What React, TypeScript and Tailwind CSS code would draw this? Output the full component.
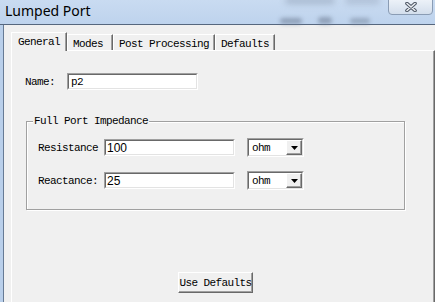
const mono = "font-['Liberation_Mono',monospace] text-[11px] tracking-[-0.6px] text-black leading-[12px]";

function Sunken({ className, children }: { className: string; children?: React.ReactNode }) {
  return (
    <div className={`border border-t-[#a0a0a0] border-l-[#a0a0a0] border-b-white border-r-white ${className}`}>
      <div className="h-full border border-t-[#696969] border-l-[#696969] border-b-[#e3e3e3] border-r-[#e3e3e3] bg-white flex items-center pl-[1px]">
        {children}
      </div>
    </div>
  );
}

function Combo() {
  return (
    <Sunken className="w-[57px] h-[19px]">
      <span className={`${mono} flex-1 pl-[2px]`}>ohm</span>
      <div className="w-[16px] h-[15px] border border-t-white border-l-white border-b-[#696969] border-r-[#696969] bg-[#f0f0f0] shadow-[inset_-1px_-1px_0_#a0a0a0] flex items-center justify-center">
        <svg width="7" height="4" viewBox="0 0 7 4">
          <path d="M0 0h7L3.5 4z" fill="#000" />
        </svg>
      </div>
    </Sunken>
  );
}

function Tab({ label, active, w }: { label: string; active?: boolean; w: string }) {
  return active ? (
    <div className={`${w} h-[19px] -mb-px relative z-10 bg-[#f0f0f0] border-t border-l border-t-white border-l-white border-r border-r-[#696969] shadow-[inset_-1px_0_0_#a0a0a0] pl-[6px] pt-[3px] flex items-start`}>
      <span className={mono}>{label}</span>
    </div>
  ) : (
    <div className={`${w} h-[16px] border-t border-l border-t-white border-l-white border-r border-r-[#696969] shadow-[inset_-1px_0_0_#a0a0a0] pl-[5px] pt-[3px] flex items-start`}>
      <span className={mono}>{label}</span>
    </div>
  );
}

export default function App() {
  return (
    <div className="w-[435px] h-[302px] overflow-hidden bg-[#c3d6ee] flex flex-col">
      <div className="h-[24px] relative shrink-0 bg-gradient-to-b from-[#c9dbf1] to-[#bed3ed]">
        <span className="absolute left-[5px] top-[2px] font-['Noto_Sans',sans-serif] text-[14px] text-black leading-[18px]">
          Lumped Port
        </span>
        <div className="absolute left-[285px] top-[-3px] w-[50px] h-[7px] rounded-full bg-[#8797ad]/50 blur-[3px]" />
        <div className="absolute left-[345px] top-[-3px] w-[35px] h-[7px] rounded-full bg-[#8797ad]/40 blur-[3px]" />
        <div className="absolute left-[280px] top-[18px] w-[22px] h-[6px] rounded-full bg-[#6f7f96]/60 blur-[2px]" />
        <div className="absolute left-[318px] top-[17px] w-[14px] h-[7px] rounded-full bg-[#6f7f96]/60 blur-[2px]" />
        <div className="absolute left-[350px] top-[18px] w-[20px] h-[6px] rounded-full bg-[#6f7f96]/50 blur-[2px]" />
        <div className="absolute left-[388px] top-[-2px] w-[45px] h-[17px] rounded-b-[4px] border border-[#8a9cb4] bg-gradient-to-b from-[#eef3f9] to-[#d3deec] flex items-center justify-center">
          <svg width="12" height="10" viewBox="0 0 12 10">
            <path d="M2 1.5l8 7M10 1.5l-8 7" stroke="#4c5563" strokeWidth="3.6" strokeLinecap="round" />
            <path d="M2 1.5l8 7M10 1.5l-8 7" stroke="#eceff3" strokeWidth="1.6" strokeLinecap="round" />
          </svg>
        </div>
      </div>
      <div className="h-px bg-[#56677e] shrink-0" />
      <div className="flex-1 flex">
        <div className="w-[3px] bg-[#b9cfea]" />
        <div className="w-px bg-[#667a94]" />
        <div className="flex-1 bg-[#f0f0f0] pl-[7px] pt-[7px] flex flex-col">
          <div className="flex items-end">
            <Tab label="General" active w="w-[56px]" />
            <Tab label="Modes" w="w-[46px]" />
            <Tab label="Post Processing" w="w-[102px]" />
            <Tab label="Defaults" w="w-[60px]" />
          </div>
          <div className="flex-1 border-t border-l border-t-white border-l-white border-r border-r-[#696969] shadow-[inset_-1px_0_0_#a0a0a0] flex flex-col">
            <div className="flex items-center pl-[13px] mt-[22px]">
              <span className={`${mono} w-[42px]`}>Name:</span>
              <Sunken className="w-[131px] h-[17px]">
                <span className={`${mono} pl-[1px]`}>p2</span>
              </Sunken>
            </div>
            <fieldset className="ml-[14px] w-[379px] mt-[25px] border border-[#a0a0a0] shadow-[inset_1px_1px_0_white,1px_1px_0_white] pl-[6px] pb-[19px]">
              <legend className={`${mono} px-[1px] bg-[#f0f0f0]`}>Full Port Impedance</legend>
              <div className="flex items-center h-[19px] mt-[11px] pl-[5px]">
                <span className={`${mono} w-[62px] mr-[4px] overflow-hidden whitespace-nowrap`}>Resistance:</span>
                <Sunken className="w-[131px] h-[17px]">
                  <span className="font-['Liberation_Sans',sans-serif] text-[12px] text-black leading-[14px]">100</span>
                </Sunken>
                <div className="ml-[12px]">
                  <Combo />
                </div>
              </div>
              <div className="flex items-center h-[19px] mt-[14px] pl-[5px]">
                <span className={`${mono} w-[66px] whitespace-nowrap`}>Reactance:</span>
                <Sunken className="w-[131px] h-[17px]">
                  <span className="font-['Liberation_Sans',sans-serif] text-[12px] text-black leading-[14px]">25</span>
                </Sunken>
                <div className="ml-[12px]">
                  <Combo />
                </div>
              </div>
            </fieldset>
            <div className="ml-[166px] mt-[62px] w-[75px] h-[21px] border border-t-white border-l-white border-b-[#696969] border-r-[#696969] shadow-[inset_-1px_-1px_0_#a0a0a0] bg-[#f0f0f0] flex items-center justify-center">
              <span className={mono}>Use Defaults</span>
            </div>
          </div>
        </div>
      </div>
    </div>
  );
}
